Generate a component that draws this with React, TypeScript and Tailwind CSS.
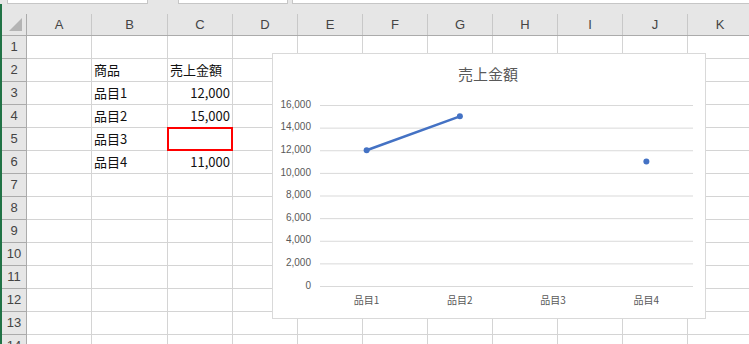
import React from 'react';

const columns = ['A', 'B', 'C', 'D', 'E', 'F', 'G', 'H', 'I', 'J', 'K'];
const colWidths = ['w-[65px]', 'w-[76px]', 'w-[65px]', 'w-[65px]', 'w-[65px]', 'w-[65px]', 'w-[65px]', 'w-[65px]', 'w-[65px]', 'w-[65px]', 'w-[65px]'];

// cell contents keyed by row number
const cells: Record<number, { b?: string; c?: string; cRight?: boolean }> = {
    2: { b: '商品', c: '売上金額' },
    3: { b: '品目1', c: '12,000', cRight: true },
    4: { b: '品目2', c: '15,000', cRight: true },
    5: { b: '品目3' },
    6: { b: '品目4', c: '11,000', cRight: true },
};

const sales = [12000, 15000, null, 11000];
const yTicks = [16000, 14000, 12000, 10000, 8000, 6000, 4000, 2000, 0];

const plotLeft = 47;
const plotRight = 420;
const plotTop = 51;
const plotBottom = 232;
const catWidth = (plotRight - plotLeft) / 4;
const yOf = (v: number) => plotBottom - (v / 16000) * (plotBottom - plotTop);
const xOf = (i: number) => plotLeft + catWidth * (i + 0.5);

const SalesChart: React.FC = () => (
    <div className="absolute left-[272px] top-[53px] w-[434px] h-[266px] bg-white border border-[#d9d9d9]">
        <svg width="432" height="264" className="block">
            <text
                x="215"
                y="22"
                textAnchor="middle"
                dominantBaseline="middle"
                fontSize="15"
                fill="#595959"
                fontFamily="'Noto Sans CJK JP', sans-serif"
            >
                売上金額
            </text>
            {yTicks.map((t) => (
                <g key={t}>
                    <line x1={plotLeft} x2={plotRight} y1={yOf(t) + 0.5} y2={yOf(t) + 0.5} stroke="#d9d9d9" strokeWidth="1" />
                    <text
                        x="38"
                        y={yOf(t)}
                        textAnchor="end"
                        dominantBaseline="middle"
                        fontSize="10"
                        fill="#595959"
                        fontFamily="'Liberation Sans', sans-serif"
                    >
                        {t.toLocaleString('en-US')}
                    </text>
                </g>
            ))}
            {['品目1', '品目2', '品目3', '品目4'].map((c, i) => (
                <text
                    key={c}
                    x={xOf(i)}
                    y="247"
                    textAnchor="middle"
                    dominantBaseline="middle"
                    fontSize="10"
                    fill="#595959"
                    fontFamily="'Noto Sans CJK JP', sans-serif"
                >
                    {c}
                </text>
            ))}
            <line x1={xOf(0)} y1={yOf(12000)} x2={xOf(1)} y2={yOf(15000)} stroke="#4472c4" strokeWidth="2.5" strokeLinecap="round" />
            {sales.map((v, i) =>
                v === null ? null : <circle key={i} cx={xOf(i)} cy={yOf(v)} r="3" fill="#4472c4" />
            )}
        </svg>
    </div>
);

export default function App() {
    const rows = Array.from({ length: 14 }, (_, i) => i + 1);

    return (
        <div className="relative w-[749px] h-[344px] overflow-hidden bg-white" style={{ fontFamily: "'Liberation Sans', sans-serif" }}>
            {/* formula bar remnants */}
            <div className="flex h-[4px] bg-[#e6e6e6]">
                <div className="ml-[7px] w-[141px] bg-white border-x border-b border-[#c6c6c6]" />
                <div className="ml-[30px] w-[110px] bg-white border-x border-b border-[#c6c6c6]" />
                <div className="ml-[4px] flex-1 bg-white border-l border-b border-[#c6c6c6]" />
            </div>

            <div className="flex">
                <div className="w-[2px] bg-[#217346] shrink-0" />
                <div className="flex-1">
                    <div className="h-[10px] bg-[#e6e6e6]" />

                    {/* column headers */}
                    <div className="flex h-[22px] bg-[#e6e6e6] border-b border-[#ababab] text-[13px] text-[#444]">
                        <div className="w-[25px] shrink-0 border-r border-[#ababab] relative">
                            <div className="absolute right-[4px] bottom-[4px] w-0 h-0 border-l-[13px] border-l-transparent border-b-[13px] border-b-[#b4b4b4]" />
                        </div>
                        {columns.map((c, i) => (
                            <div key={c} className={`${colWidths[i]} shrink-0 border-r border-[#c8c8c8] flex items-center justify-center`}>
                                {c}
                            </div>
                        ))}
                    </div>

                    {rows.map((r) => {
                        const row = cells[r] || {};
                        return (
                            <div key={r} className="flex h-[23px]">
                                <div className="w-[25px] shrink-0 bg-[#e6e6e6] border-r border-b border-[#ababab] flex items-center justify-center text-[13px] text-[#444]">
                                    {r}
                                </div>
                                {columns.map((c, i) => {
                                    let content: string | undefined;
                                    let right = false;
                                    if (c === 'B') content = row.b;
                                    if (c === 'C') {
                                        content = row.c;
                                        right = !!row.cRight;
                                    }
                                    const selected = c === 'C' && r === 5;
                                    return (
                                        <div
                                            key={c}
                                            className={`${colWidths[i]} shrink-0 border-r border-b border-[#d4d4d4] relative flex items-center px-[2px] text-[13px] text-[#111] ${right ? 'justify-end' : 'justify-start'}`}
                                            style={{ fontFamily: "'Noto Sans CJK JP', sans-serif" }}
                                        >
                                            {content}
                                            {selected && (
                                                <div className="absolute left-[-1px] top-[-1px] w-[66px] h-[24px] border-2 border-[#ff0000]" />
                                            )}
                                        </div>
                                    );
                                })}
                            </div>
                        );
                    })}
                </div>
            </div>

            <SalesChart />
        </div>
    );
}
